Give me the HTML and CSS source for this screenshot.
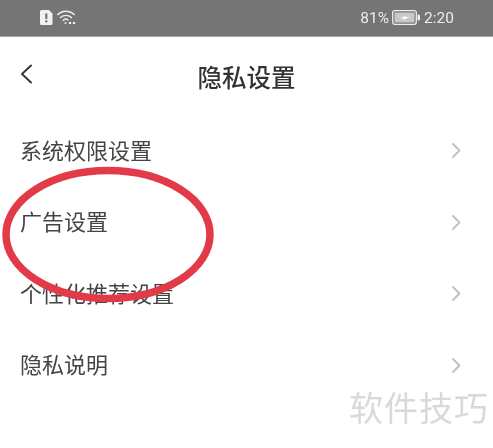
FILE: index.html
```html
<!DOCTYPE html>
<html lang="zh">
<head>
<meta charset="utf-8">
<title>隐私设置</title>
<link rel="stylesheet" href="styles.css">
</head>
<body>
<div class="screen">
  <header class="status">
    <div class="status-left">
      <svg class="sim" width="13" height="15" viewBox="0 0 13 15"><path d="M1.5 0H9l3.5 3.5V13.5A1.5 1.5 0 0 1 11 15H1.5A1.5 1.5 0 0 1 0 13.5V1.500A1.5 1.5 0 0 1 1.500 0Z" fill="#f1f1f1"/><rect x="5.200" y="3.500" width="2.200" height="5.500" fill="#777"/><rect x="5.200" y="10.200" width="2.200" height="2.200" fill="#777"/></svg>
      <svg class="wifi" width="19" height="15" viewBox="0 0 19 15" fill="none" stroke="#eee" stroke-width="1.500" stroke-linecap="round"><path d="M.8 4.500C5.500.2 12.500.2 17.200 4.500"/><path d="M3.500 7.500C6.800 4.700 11.200 4.700 14.500 7.500"/><path d="M6.200 10.300C7.800 9 9.800 9 10.800 9.800"/><circle cx="8.500" cy="13" r="1" fill="#eee" stroke="none"/><circle cx="13" cy="13" r="1.300" fill="#eee" stroke="none"/><circle cx="17" cy="13" r="1.300" fill="#eee" stroke="none"/></svg>
    </div>
    <div class="status-right">
      <span>81%</span>
      <svg class="battery" width="29" height="15" viewBox="0 0 29 15"><rect x=".7" y=".7" width="23.600" height="13.600" rx="2" fill="none" stroke="#eee" stroke-width="1.300"/><rect x="2.500" y="2.500" width="20" height="10" fill="#c9c9c9"/><path d="M8 8.500L14 5.500L13.500 7H18L11 10L11.500 8.500Z" fill="#fafafa"/><rect x="25.500" y="4.500" width="2.500" height="6" rx="1" fill="#eee"/></svg>
      <span>2:20</span>
    </div>
  </header>
  <nav class="nav">
    <svg class="back" width="13" height="20" viewBox="0 0 13 20" fill="none" stroke="#333" stroke-width="1.900" stroke-linecap="round" stroke-linejoin="round"><path d="M11 1.500L2 10L11 18.500"/></svg>
    <h1 class="title">隐私设置</h1>
  </nav>
  <ul class="list">
    <li class="row"><span>系统权限设置</span><svg class="chev" width="9" height="15" viewBox="0 0 9 15"><path d="M1 1L7.500 7.500L1 14"/></svg></li>
    <li class="row"><span>广告设置</span><svg class="chev" width="9" height="15" viewBox="0 0 9 15"><path d="M1 1L7.500 7.500L1 14"/></svg></li>
    <li class="row"><span>个性化推荐设置</span><svg class="chev" width="9" height="15" viewBox="0 0 9 15"><path d="M1 1L7.500 7.500L1 14"/></svg></li>
    <li class="row"><span>隐私说明</span><svg class="chev" width="9" height="15" viewBox="0 0 9 15"><path d="M1 1L7.500 7.500L1 14"/></svg></li>
  </ul>
  <svg class="circle" width="220" height="160" viewBox="0 0 220 160"><ellipse cx="108" cy="84.500" rx="102" ry="64" fill="none" stroke="#e23a48" stroke-width="7.500"/></svg>
  <div class="watermark">软件技巧</div>
</div>
</body>
</html>
```
FILE: styles.css
```css
* { box-sizing: border-box; }
html, body { margin: 0; padding: 0; }
body { background: #fff; font-family: "Noto Sans CJK SC", "Liberation Sans", sans-serif; }
.screen { position: relative; width: 493px; height: 448px; overflow: hidden; background: #fff; filter: blur(0.4px); }
.status {
  height: 37px;
  background: #757575;
  border-bottom: 1px solid #a8a8a8;
  display: flex;
  justify-content: space-between;
  align-items: center;
  padding: 0 39px 1px 40px;
  color: #ececec;
  font-family: "Roboto", "Liberation Sans", sans-serif;
  font-size: 15.500px;
}
.status-left, .status-right { display: flex; align-items: center; }
.status-left { gap: 4px; }
.status-right { gap: 3px; }
.nav {
  height: 80px;
  display: flex;
  align-items: center;
  justify-content: center;
  position: relative;
}
.back { position: absolute; left: 20px; top: 27px; }
.title { margin: 0; font-size: 24.500px; font-weight: 500; color: #333; line-height: 1; }
.list { list-style: none; margin: 0; padding: 0; }
.row {
  height: 71.500px;
  padding: 0 32px 0 20px;
  display: flex;
  justify-content: space-between;
  align-items: center;
  font-size: 22px;
  color: #444;
}
.row span { position: relative; top: -2px; }
.row:first-child { margin-top: -2px; }
.chev { fill: none; stroke: #c0c0c0; stroke-width: 1.800; stroke-linecap: round; stroke-linejoin: round; }
.circle { position: absolute; left: 0; top: 150px; }
.watermark {
  position: absolute;
  right: 4px;
  top: 387px;
  font-size: 34px;
  line-height: 1.200;
  letter-spacing: 1px;
  color: #d9d9d9;
}
```
